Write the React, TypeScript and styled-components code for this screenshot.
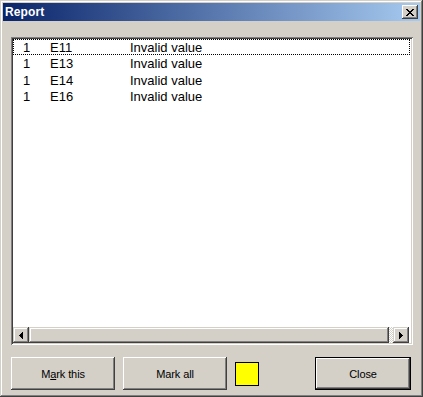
import React from "react";
import styled, { createGlobalStyle } from "styled-components";

const Global = createGlobalStyle`
  html, body { margin: 0; padding: 0; background: #d4d0c8; }
  body { font-family: "Liberation Sans", Arial, sans-serif; }
  * { box-sizing: border-box; }
`;

const Win = styled.div`
  width: 423px;
  height: 397px;
  background: #d4d0c8;
  padding: 3px;
  display: flex;
  flex-direction: column;
  box-shadow: inset -1px -1px #404040, inset 1px 1px #d4d0c8,
    inset -2px -2px #808080, inset 2px 2px #ffffff;
`;

const TitleBar = styled.div`
  height: 18px;
  display: flex;
  align-items: center;
  justify-content: space-between;
  padding: 0 2px 0 2px;
  background: linear-gradient(to right, #0a246a, #a6caf0);
`;

const TitleText = styled.span`
  color: #fff;
  font-weight: bold;
  font-size: 12px;
  letter-spacing: 0.1px;
`;

const TitleBtn = styled.div`
  width: 16px;
  height: 14px;
  background: #d4d0c8;
  display: flex;
  align-items: center;
  justify-content: center;
  padding-right: 1px;
  box-shadow: inset -1px -1px #404040, inset 1px 1px #ffffff,
    inset -2px -2px #808080, inset 2px 2px #d4d0c8;
`;

const Body = styled.div`
  flex: 1;
  display: flex;
  flex-direction: column;
  padding: 16px 7px 4px 8px;
`;

const ListBox = styled.div`
  height: 308px;
  background: #fff;
  padding: 2px;
  display: flex;
  flex-direction: column;
  box-shadow: inset 1px 1px #808080, inset -1px -1px #ffffff,
    inset 2px 2px #404040, inset -2px -2px #d4d0c8;
`;

const Rows = styled.div`
  flex: 1;
  font-size: 13px;
  color: #000;
`;

const Row = styled.div<{ $focus?: boolean }>`
  height: 16.33px;
  display: grid;
  grid-template-columns: 27px 80px 1fr;
  align-items: center;
  padding-left: 9px;
  border: 1px dotted ${(p) => (p.$focus ? "#000" : "transparent")};
  margin-right: 1px;
`;

const HScroll = styled.div`
  height: 16px;
  display: flex;
  margin-right: 2px;
`;

const ArrowBtn = styled.div`
  width: 16px;
  height: 16px;
  background: #d4d0c8;
  display: flex;
  align-items: center;
  justify-content: center;
  box-shadow: inset -1px -1px #404040, inset 1px 1px #d4d0c8,
    inset -2px -2px #808080, inset 2px 2px #ffffff;
`;

const Thumb = styled.div`
  flex: 1;
  background: #d4d0c8;
  box-shadow: inset -1px -1px #404040, inset 1px 1px #d4d0c8,
    inset -2px -2px #808080, inset 2px 2px #ffffff;
`;

const Track = styled.div`
  width: 4px;
  background-image: conic-gradient(#ffffff 25%, #d4d0c8 0 50%, #ffffff 0 75%, #d4d0c8 0);
  background-size: 2px 2px;
`;

const ButtonRow = styled.div`
  margin-top: 12px;
  display: flex;
  align-items: center;
  gap: 8px;
`;

const Button = styled.div<{ $w: number; $default?: boolean; $mr?: number }>`
  width: ${(p) => p.$w}px;
  height: 33px;
  margin-right: ${(p) => p.$mr ?? 0}px;
  background: #d4d0c8;
  display: flex;
  align-items: center;
  justify-content: center;
  font-size: 11px;
  letter-spacing: -0.1px;
  color: #000;
  border: ${(p) => (p.$default ? "1px solid #000" : "none")};
  box-shadow: inset -1px -1px #404040, inset 1px 1px #ffffff,
    inset -2px -2px #808080, inset 2px 2px #d4d0c8;
`;

const Spacer = styled.div`
  flex: 1;
`;

const Swatch = styled.div`
  width: 24px;
  height: 24px;
  background: #ffff00;
  border: 1px solid #000;
`;

const CloseX = () => (
  <svg width="8" height="7" viewBox="0 0 8 7" shapeRendering="crispEdges">
    <path
      fill="#000"
      d="M0 0h2v1H0zM6 0h2v1H6zM1 1h2v1H1zM5 1h2v1H5zM2 2h4v1H2zM3 3h2v1H3zM2 4h4v1H2zM1 5h2v1H1zM5 5h2v1H5zM0 6h2v1H0zM6 6h2v1H6z"
    />
  </svg>
);

const LeftArrow = () => (
  <svg width="4" height="7" viewBox="0 0 4 7" shapeRendering="crispEdges">
    <path fill="#000" d="M0 3h1v1H0zM1 2h1v3H1zM2 1h1v5H2zM3 0h1v7H3z" />
  </svg>
);

const RightArrow = () => (
  <svg width="4" height="7" viewBox="0 0 4 7" shapeRendering="crispEdges">
    <path fill="#000" d="M3 3h1v1H3zM2 2h1v3H2zM1 1h1v5H1zM0 0h1v7H0z" />
  </svg>
);

const data = [
  { n: "1", code: "E11", msg: "Invalid value" },
  { n: "1", code: "E13", msg: "Invalid value" },
  { n: "1", code: "E14", msg: "Invalid value" },
  { n: "1", code: "E16", msg: "Invalid value" },
];

export default function App() {
  return (
    <>
      <Global />
      <Win>
        <TitleBar>
          <TitleText>Report</TitleText>
          <TitleBtn>
            <CloseX />
          </TitleBtn>
        </TitleBar>
        <Body>
          <ListBox>
            <Rows>
              {data.map((r, i) => (
                <Row key={r.code} $focus={i === 0}>
                  <span>{r.n}</span>
                  <span>{r.code}</span>
                  <span>{r.msg}</span>
                </Row>
              ))}
            </Rows>
            <HScroll>
              <ArrowBtn>
                <LeftArrow />
              </ArrowBtn>
              <Thumb />
              <Track />
              <ArrowBtn>
                <RightArrow />
              </ArrowBtn>
            </HScroll>
          </ListBox>
          <ButtonRow>
            <Button $w={104}>
              <span>
                M<u>a</u>rk this
              </span>
            </Button>
            <Button $w={104}>Mark all</Button>
            <Swatch />
            <Spacer />
            <Button $w={96} $default $mr={2}>
              Close
            </Button>
          </ButtonRow>
        </Body>
      </Win>
    </>
  );
}
